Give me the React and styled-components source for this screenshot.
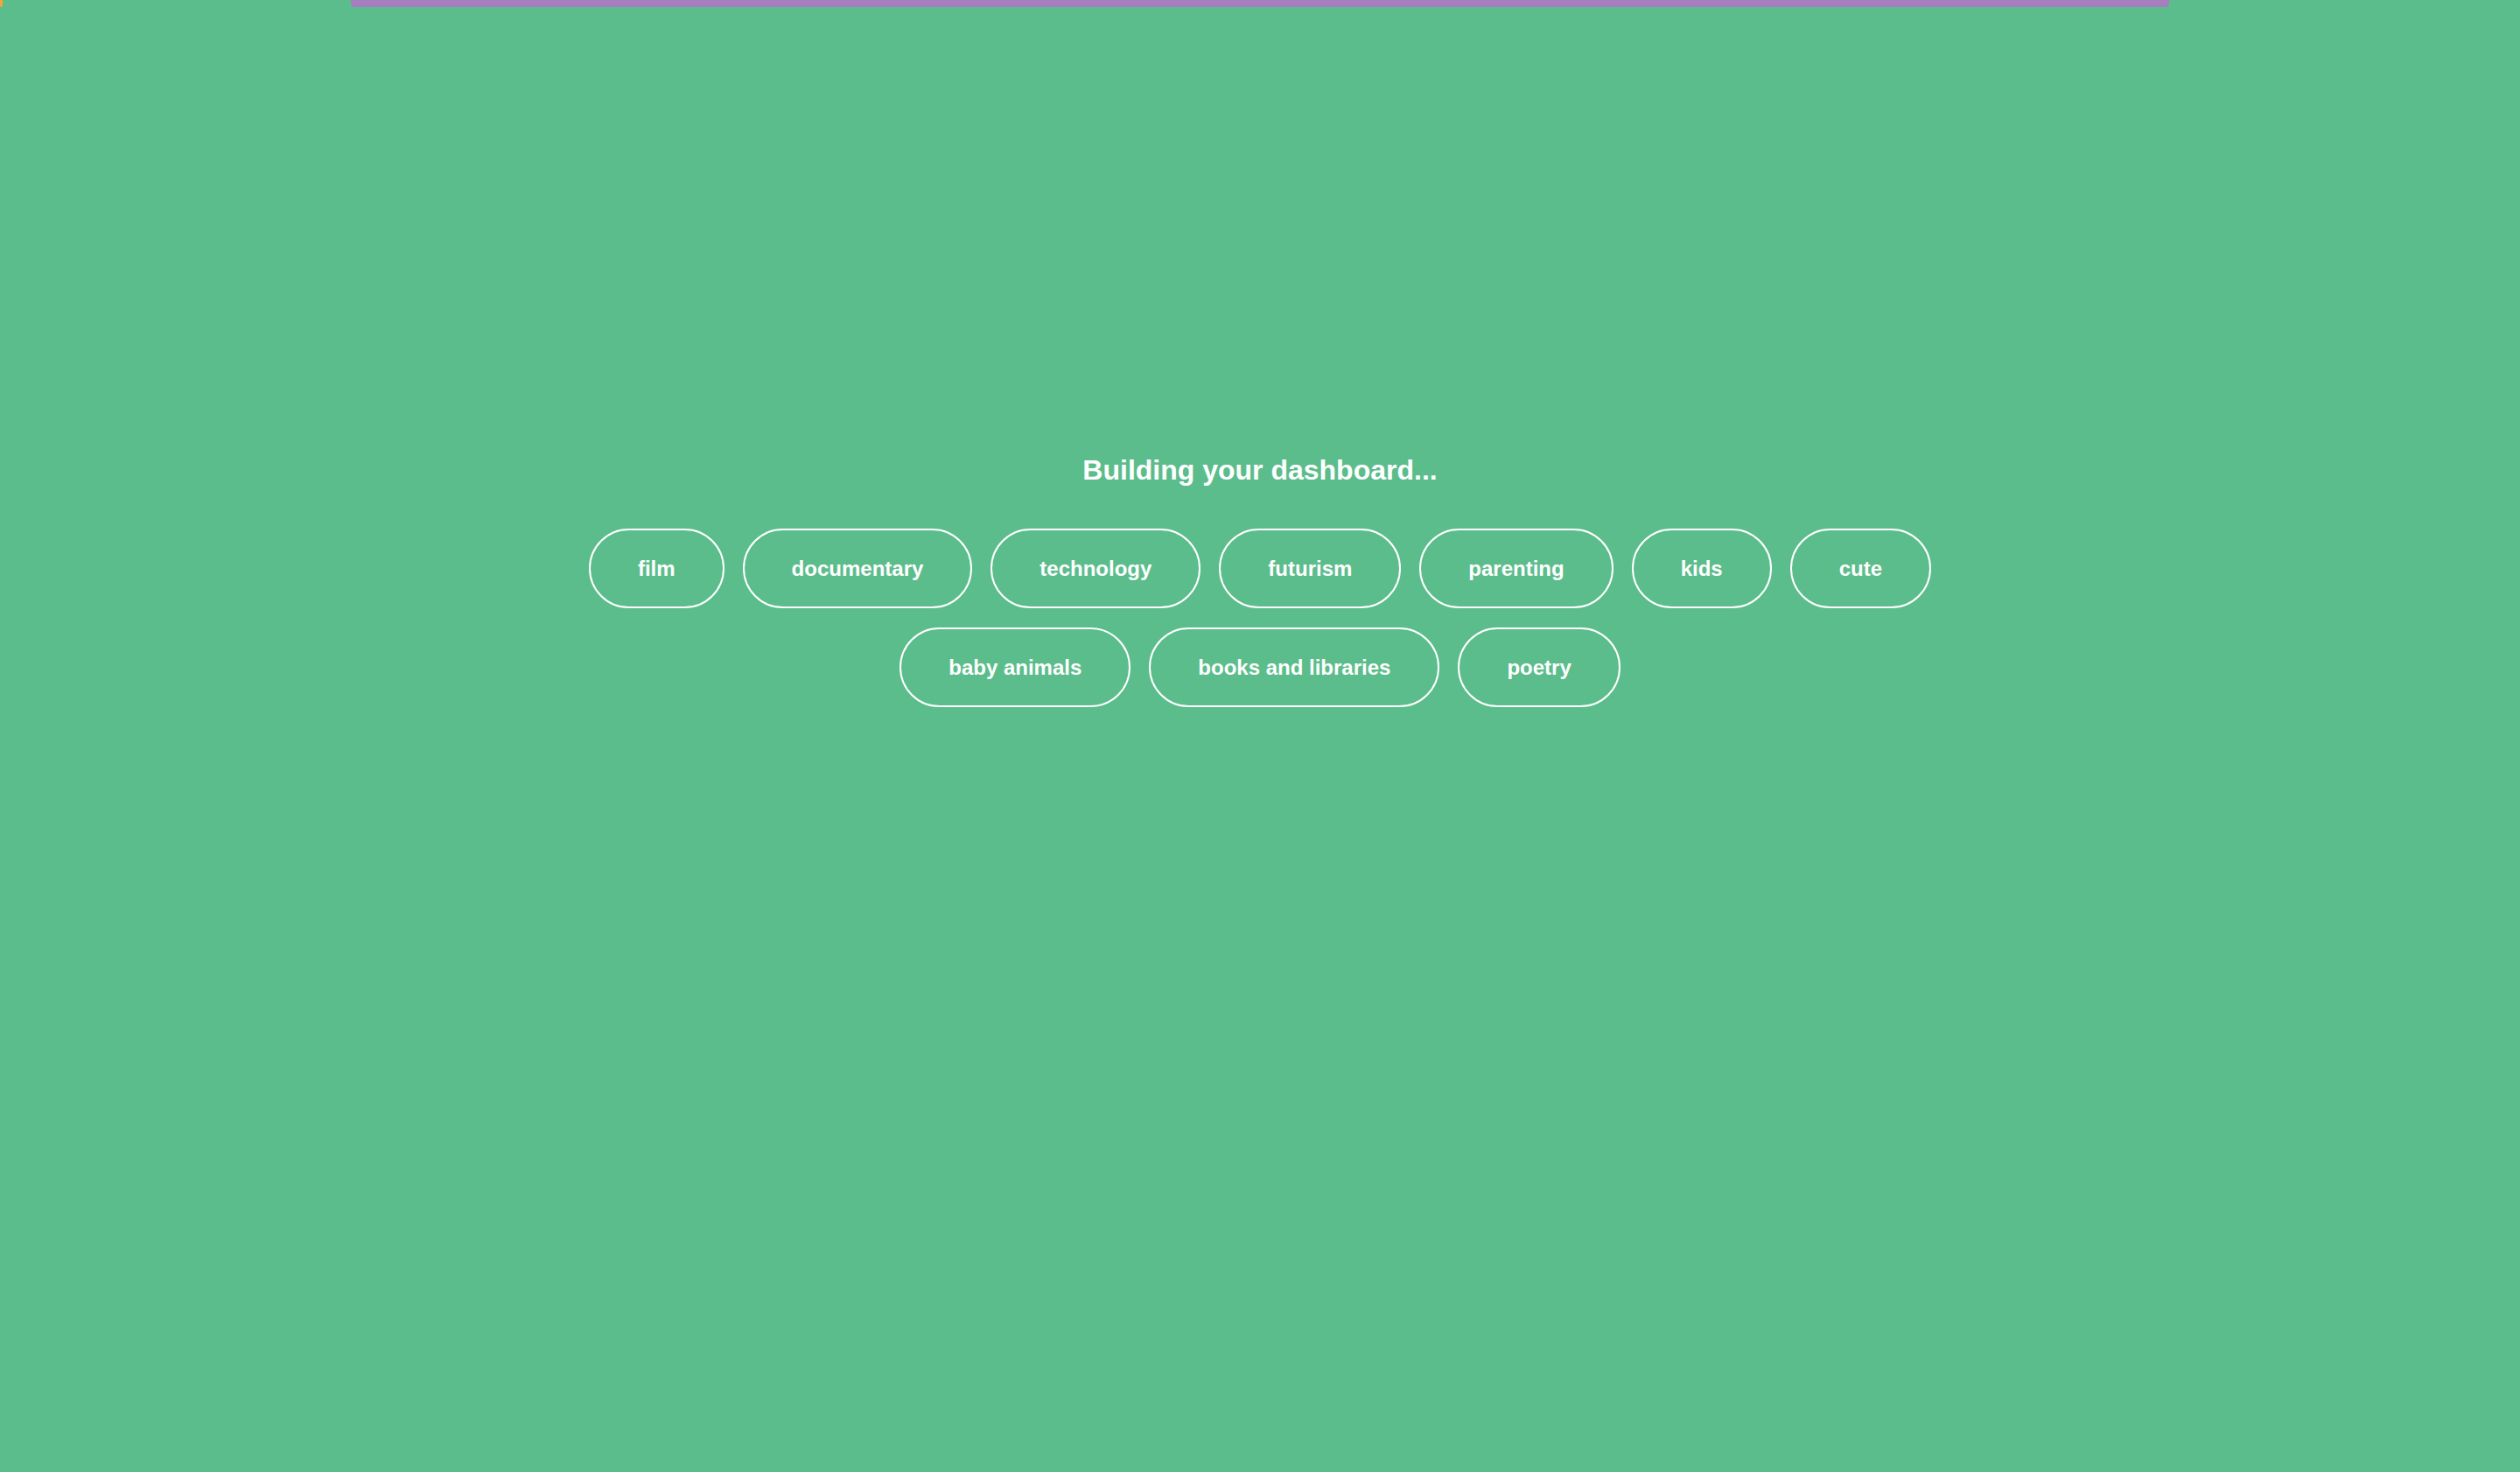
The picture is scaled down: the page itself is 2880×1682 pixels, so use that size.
import styled, { createGlobalStyle } from 'styled-components';

const Global = createGlobalStyle`
  html, body { margin: 0; padding: 0; background: #5bbd8b; }
  body { font-family: 'Liberation Sans', Arial, sans-serif; }
`;

const Page = styled.div`
  position: relative;
  width: 100%;
  height: 100vh;
  background: #5bbd8b;
  overflow: hidden;
`;

const Progress = styled.div`
  position: absolute;
  top: 0;
  left: 0;
  right: 0;
  height: 8px;
`;

const Bar = styled.div`
  position: absolute;
  top: 0;
  height: 8px;
  border-radius: 0 0 4px 4px;
  background: ${p => p.$color};
`;

const Content = styled.div`
  display: flex;
  flex-direction: column;
  align-items: center;
  padding-top: 515px;
`;

const Title = styled.h1`
  margin: 0 0 45px;
  color: #fff;
  font-size: 32px;
  font-weight: 700;
  line-height: 44px;
`;

const Tags = styled.div`
  display: flex;
  flex-wrap: wrap;
  justify-content: center;
  gap: 22px 21px;
  max-width: 1760px;
`;

const Tag = styled.div`
  height: 87px;
  padding: 0 54px;
  border: 2px solid #fff;
  border-radius: 50px;
  display: flex;
  align-items: center;
  color: #fff;
  font-size: 24px;
  font-weight: 700;
`;

const tags = ['film', 'documentary', 'technology', 'futurism', 'parenting', 'kids', 'cute', 'baby animals', 'books and libraries', 'poetry'];

export default function App() {
  return (
    <Page>
      <Global />
      <Progress>
        <Bar $color="#f4a53a" style={{ left: 0, width: 3 }} />
        <Bar $color="#a77fc0" style={{ left: 401, width: 2078 }} />
      </Progress>
      <Content>
        <Title>Building your dashboard...</Title>
        <Tags>
          {tags.slice(0, 7).map(t => <Tag key={t}>{t}</Tag>)}
        </Tags>
        <Tags style={{ marginTop: 22 }}>
          {tags.slice(7).map(t => <Tag key={t}>{t}</Tag>)}
        </Tags>
      </Content>
    </Page>
  );
}
